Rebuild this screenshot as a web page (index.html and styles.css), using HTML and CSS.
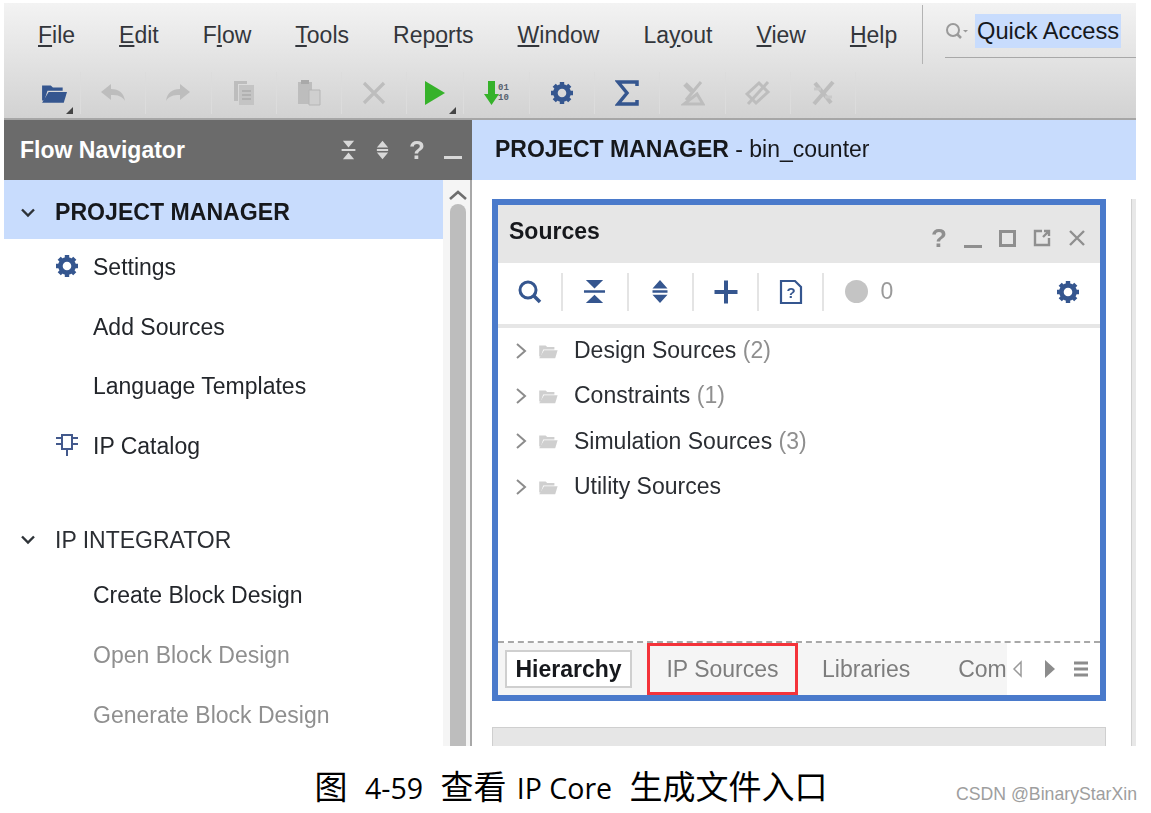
FILE: index.html
```html
<!DOCTYPE html>
<html lang="zh-CN">
<head>
  <meta charset="UTF-8">
  <title>图 4-59 查看 IP Core 生成文件入口</title>
  <link rel="stylesheet" href="styles.css">
</head>
<body>

  <svg class="defs" width="0" height="0">
    <symbol id="gear" viewBox="0 0 24 24">
      <circle cx="12" cy="12" r="6.6" fill="none" stroke="currentColor" stroke-width="4.6"/>
      <path d="M12 1v22M1 12h22M4.2 4.2l15.6 15.6M19.800 4.200L4.200 19.800" stroke="currentColor" stroke-width="4.400" stroke-dasharray="4.500 13 4.500 100"/>
    </symbol>
    <symbol id="collapse" viewBox="0 0 24 24" preserveAspectRatio="none">
      <path d="M3 1h18l-9 8zM3 23h18l-9-8z" fill="currentColor"/>
      <path d="M1 12h22" stroke="currentColor" stroke-width="2.400"/>
    </symbol>
    <symbol id="expand" viewBox="0 0 24 24" preserveAspectRatio="none">
      <path d="M12 1l9 8H3zM12 23l-9-8h18z" fill="currentColor"/>
      <path d="M3 12h18" stroke="currentColor" stroke-width="2.400"/>
    </symbol>
    <symbol id="folder" viewBox="0 0 24 20">
      <path d="M1 3h8l2 2h9v3H6L3 17H1z" fill="currentColor"/>
      <path d="M7 9h17l-3 10H1z" fill="currentColor"/>
    </symbol>
  </svg>

  <div class="app">
    <div class="top">
      <div class="menubar">
        <ul class="menu">
          <li><u>F</u>ile</li>
          <li><u>E</u>dit</li>
          <li>F<u>l</u>ow</li>
          <li><u>T</u>ools</li>
          <li>Rep<u>o</u>rts</li>
          <li><u>W</u>indow</li>
          <li>La<u>y</u>out</li>
          <li><u>V</u>iew</li>
          <li><u>H</u>elp</li>
        </ul>
        <div class="quick">
          <svg class="quick-icon" width="24" height="20" viewBox="0 0 24 20">
            <circle cx="8" cy="9" r="6" fill="none" stroke="#9a9a9a" stroke-width="2"/>
            <path d="M12 13l4 4" stroke="#9a9a9a" stroke-width="2.500"/>
            <path d="M18 9h5l-2.500 2.500z" fill="#9a9a9a"/>
          </svg>
          <span class="quick-text">Quick Access</span>
        </div>
      </div>
      <div class="toolbar">
        <div class="tool first more">
          <svg class="blue" width="26" height="22"><use href="#folder"/></svg>
        </div>
        <div class="tool">
          <svg width="26" height="20" viewBox="0 0 26 20"><path d="M1 9l10-8v5c8 0 13 4 14 12-3-5-7-6-14-6v5z" fill="#bdbdbd"/></svg>
        </div>
        <div class="tool">
          <svg width="26" height="20" viewBox="0 0 26 20"><path d="M25 9L15 1v5C7 6 2 10 1 18c3-5 7-6 14-6v5z" fill="#bdbdbd"/></svg>
        </div>
        <div class="tool">
          <svg width="22" height="26" viewBox="0 0 22 26"><path d="M1 1h13v3H5v17H1z" fill="#bdbdbd"/><path d="M6 5h15v20H6z" fill="#c4c4c4"/><path d="M9 11h9M9 15h9M9 19h9" stroke="#aaa" stroke-width="1.500"/></svg>
        </div>
        <div class="tool">
          <svg width="24" height="26" viewBox="0 0 24 26"><path d="M1 2h14v22H1z" fill="#bdbdbd"/><path d="M4 0h8v4H4z" fill="#a9a9a9"/><path d="M12 10h11v15H12z" fill="#cfcfcf" stroke="#b5b5b5"/></svg>
        </div>
        <div class="tool">
          <svg width="24" height="24" viewBox="0 0 24 24"><path d="M2 2l20 20M22 2L2 22" stroke="#bdbdbd" stroke-width="3.200"/></svg>
        </div>
        <div class="tool run more">
          <svg width="22" height="26" viewBox="0 0 22 26"><path d="M1 1l20 12L1 25z" fill="#36b22a"/></svg>
        </div>
        <div class="tool prog">
          <svg width="26" height="26" viewBox="0 0 26 26"><path d="M4 1h7v13h4l-7.500 11L0 14h4z" fill="#36b22a"/><text x="14" y="10" class="bits">01</text><text x="14" y="20" class="bits">10</text></svg>
        </div>
        <div class="tool">
          <svg class="blue" width="24" height="24"><use href="#gear"/></svg>
        </div>
        <div class="tool">
          <svg width="24" height="26" viewBox="0 0 24 26"><path d="M22 6V2H3l9 11-9 11h19v-4" fill="none" stroke="#35568f" stroke-width="3.500"/></svg>
        </div>
        <div class="tool">
          <svg width="24" height="26" viewBox="0 0 24 26"><path d="M3 24h19l-6-10zM20 2L5 20" stroke="#bdbdbd" stroke-width="3" fill="#d2d2d2"/><path d="M4 4l7 7" stroke="#bdbdbd" stroke-width="5"/></svg>
        </div>
        <div class="tool">
          <svg width="26" height="26" viewBox="0 0 26 26"><path d="M2 14L14 3l9 9-12 11z" fill="none" stroke="#bdbdbd" stroke-width="3"/><path d="M23 2L3 24" stroke="#bdbdbd" stroke-width="3"/></svg>
        </div>
        <div class="tool">
          <svg width="24" height="26" viewBox="0 0 24 26"><path d="M4 3l16 20M22 2L3 24" stroke="#bdbdbd" stroke-width="4"/><path d="M3 9h7M14 17h7" stroke="#c9c9c9" stroke-width="3"/></svg>
        </div>
      </div>
    </div>

    <div class="work">
      <aside class="nav">
        <div class="nav-head">
          <span class="nav-title">Flow Navigator</span>
          <span class="nav-tools">
            <svg width="15" height="20"><use href="#collapse"/></svg>
            <svg width="15" height="20"><use href="#expand"/></svg>
            <span class="help">?</span>
            <span class="min"></span>
          </span>
        </div>
        <div class="nav-body">
          <div class="nav-list">
            <div class="group active">
              <svg class="chev" width="16" height="10" viewBox="0 0 16 10"><path d="M2 1.500l6 6 6-6" fill="none" stroke="#2e3338" stroke-width="2.400"/></svg>
              PROJECT MANAGER
            </div>
            <div class="item">
              <svg class="item-icon blue" width="24" height="24"><use href="#gear"/></svg>
              Settings
            </div>
            <div class="item">Add Sources</div>
            <div class="item">Language Templates</div>
            <div class="item">
              <svg class="item-icon" width="24" height="24" viewBox="0 0 24 24"><path d="M7 2h10v14H7zM12 16v7M1 5h6M1 11h6M17 5h6M17 11h6" fill="none" stroke="#43598c" stroke-width="2"/></svg>
              IP Catalog
            </div>
            <div class="group second">
              <svg class="chev" width="16" height="10" viewBox="0 0 16 10"><path d="M2 1.500l6 6 6-6" fill="none" stroke="#2e3338" stroke-width="2.400"/></svg>
              IP INTEGRATOR
            </div>
            <div class="item">Create Block Design</div>
            <div class="item off">Open Block Design</div>
            <div class="item off">Generate Block Design</div>
          </div>
          <div class="scroll">
            <svg width="20" height="12" viewBox="0 0 20 12"><path d="M2 10l8-7 8 7" fill="none" stroke="#6e6e6e" stroke-width="2.600"/></svg>
            <div class="thumb"></div>
          </div>
        </div>
      </aside>

      <main class="main">
        <div class="main-head"><b>PROJECT MANAGER</b> - bin_counter</div>
        <div class="main-body">
          <div class="panels">
            <section class="sources">
              <div class="src-title">
                <span class="src-name">Sources</span>
                <span class="win-btns">
                  <span class="help">?</span>
                  <span class="min"></span>
                  <span class="box"></span>
                  <svg width="18" height="18" viewBox="0 0 18 18"><path d="M9 2H2v14h14V9M10 8l6-6M11 2h5v5" fill="none" stroke="#8f8f8f" stroke-width="2.400"/></svg>
                  <svg width="18" height="18" viewBox="0 0 18 18"><path d="M2 2l14 14M16 2L2 16" stroke="#8f8f8f" stroke-width="2.400"/></svg>
                </span>
              </div>
              <div class="src-tools">
                <div class="src-tool">
                  <svg width="26" height="26" viewBox="0 0 26 26"><circle cx="11" cy="11" r="8" fill="none" stroke="#35568f" stroke-width="3"/><path d="M17 17l6 6" stroke="#35568f" stroke-width="3.500"/></svg>
                </div>
                <div class="src-tool"><svg class="blue" width="23" height="25"><use href="#collapse"/></svg></div>
                <div class="src-tool"><svg class="blue" width="20" height="25"><use href="#expand"/></svg></div>
                <div class="src-tool">
                  <svg width="26" height="26" viewBox="0 0 26 26"><path d="M13 1.500v23M1.500 13h23" stroke="#35568f" stroke-width="4"/></svg>
                </div>
                <div class="src-tool">
                  <svg width="24" height="26" viewBox="0 0 24 26"><path d="M2 2h14l6 6v16H2z" fill="none" stroke="#35568f" stroke-width="2.200"/><text x="12" y="19" class="doc-q">?</text></svg>
                </div>
                <div class="src-count">
                  <span class="dot"></span>
                  <span>0</span>
                </div>
                <svg class="src-gear blue" width="24" height="24"><use href="#gear"/></svg>
              </div>
              <div class="tree">
                <div class="tree-row"><svg class="arrow" width="12" height="18" viewBox="0 0 12 18"><path d="M2 2l8 7-8 7" fill="none" stroke="#8c8c8c" stroke-width="2"/></svg><svg class="tree-folder" width="20" height="16"><use href="#folder"/></svg>Design Sources <em>(2)</em></div>
                <div class="tree-row"><svg class="arrow" width="12" height="18" viewBox="0 0 12 18"><path d="M2 2l8 7-8 7" fill="none" stroke="#8c8c8c" stroke-width="2"/></svg><svg class="tree-folder" width="20" height="16"><use href="#folder"/></svg>Constraints <em>(1)</em></div>
                <div class="tree-row"><svg class="arrow" width="12" height="18" viewBox="0 0 12 18"><path d="M2 2l8 7-8 7" fill="none" stroke="#8c8c8c" stroke-width="2"/></svg><svg class="tree-folder" width="20" height="16"><use href="#folder"/></svg>Simulation Sources <em>(3)</em></div>
                <div class="tree-row"><svg class="arrow" width="12" height="18" viewBox="0 0 12 18"><path d="M2 2l8 7-8 7" fill="none" stroke="#8c8c8c" stroke-width="2"/></svg><svg class="tree-folder" width="20" height="16"><use href="#folder"/></svg>Utility Sources</div>
              </div>
              <div class="tabs">
                <div class="tab-strip">
                  <span class="tab current">Hierarchy</span>
                  <span class="tab marked">IP Sources</span>
                  <span class="tab">Libraries</span>
                  <span class="tab last">Com</span>
                </div>
                <div class="tab-btns">
                  <svg width="12" height="18" viewBox="0 0 12 18"><path d="M9 2L2 9l7 7z" fill="none" stroke="#9a9a9a" stroke-width="1.500"/></svg>
                  <svg width="12" height="18" viewBox="0 0 12 18"><path d="M2 0l10 9-10 9z" fill="#8c8c8c"/></svg>
                  <svg width="14" height="18" viewBox="0 0 14 18"><path d="M0 3h14M0 9h14M0 15h14" stroke="#8c8c8c" stroke-width="3"/></svg>
                </div>
              </div>
            </section>
            <div class="lower"></div>
          </div>
          <div class="sliver"></div>
        </div>
      </main>
    </div>
  </div>

  <div class="caption">图 <span class="latin">4-59</span> 查看 <span class="latin tight">IP Core</span> 生成文件入口</div>
  <span class="mark">CSDN @BinaryStarXin</span>

</body>
</html>
```

FILE: styles.css
```css
* {
  margin: 0;
  padding: 0;
  box-sizing: border-box;
}

body {
  position: relative;
  height: 813px;
  overflow: hidden;
  background-color: #fff;
  font-family: "Liberation Sans", Arial, sans-serif;
  font-size: 23px;
  color: #23262b;
}

ul, li {
  list-style: none;
}

.defs {
  display: block;
  height: 0;
}

.blue {
  color: #35568f;
}

/* the source picture is a slightly soft upscale */
.app {
  width: 1132px;
  height: 743px;
  margin: 3px 0 0 4px;
  display: flex;
  flex-direction: column;
  overflow: hidden;
  filter: blur(0.35px);
}

/* top bars */
.top {
  height: 117px;
  flex: none;
  background: linear-gradient(#f3f3f3, #d2d2d2);
  border-bottom: 2px solid #a6a6a6;
}

.menubar {
  height: 60px;
  display: flex;
  align-items: flex-start;
  padding-left: 34px;
}

.menu {
  display: flex;
  gap: 44px;
  padding-top: 17px;
  flex: none;
  width: 885px;
  height: 59px;
  border-right: 1px solid #b3b3b3;
  margin-top: 2px;
  color: #33363b;
}

.quick {
  margin-left: 22px;
  padding-top: 11px;
  flex: 1;
  height: 55px;
  display: flex;
  align-items: flex-start;
  gap: 6px;
  border-bottom: 1px solid #a8a8a8;
}

.quick-icon {
  margin-top: 7px;
}

.quick-text {
  background-color: #c8dcfd;
  padding: 2px;
  font-size: 23.7px;
  line-height: 30px;
  height: 34px;
  color: #16181c;
}

.toolbar {
  height: 55px;
  display: flex;
  padding-left: 17px;
}

.tool {
  position: relative;
  width: 65.3px;
  height: 42px;
  margin-top: 9px;
  display: flex;
  justify-content: center;
  align-items: center;
  border-right: 1px solid #dcdcdc;
}

.tool.first {
  width: 60px;
  padding-left: 6px;
}

.tool.run {
  width: 57px;
}

.tool.more::after {
  content: "";
  position: absolute;
  right: 7px;
  bottom: 0;
  border-left: 7px solid transparent;
  border-bottom: 7px solid #444;
}

.bits {
  font-family: "Liberation Mono", monospace;
  font-size: 9px;
  font-weight: bold;
  fill: #55606e;
}

/* left side */
.work {
  flex: 1;
  display: flex;
  min-height: 0;
}

.nav {
  width: 468px;
  flex: none;
  display: flex;
  flex-direction: column;
}

.nav-head {
  height: 60px;
  flex: none;
  background-color: #6b6b6b;
  color: #fff;
  display: flex;
  align-items: center;
  justify-content: space-between;
  padding: 0 10px 0 16px;
}

.nav-title {
  font-weight: bold;
  font-size: 23px;
}

.nav-tools {
  display: flex;
  align-items: center;
  gap: 19px;
  color: #d8d8d8;
}

.help {
  font-weight: bold;
  font-size: 26px;
  line-height: 26px;
}

.min {
  display: block;
  width: 18px;
  height: 3px;
  margin-top: 14px;
  background-color: currentColor;
}

.nav-body {
  flex: 1;
  display: flex;
  min-height: 0;
}

.nav-list {
  width: 439px;
  flex: none;
}

.group {
  display: flex;
  align-items: center;
  height: 59px;
  padding-left: 16px;
  gap: 19px;
}

.group.active {
  background-color: #c8dcfd;
  padding-top: 6px;
  font-weight: bold;
  font-size: 23.1px;
  color: #16181c;
}

.group.second {
  height: 40px;
  margin-top: 43px;
  color: #2b2e33;
}

.item {
  position: relative;
  height: 59.6px;
  line-height: 56px;
  padding-left: 89px;
}

.group.second + .item {
  margin-top: 7px;
}

.item.off {
  color: #8f8f8f;
}

.item-icon {
  position: absolute;
  left: 51px;
  top: 15px;
}

.scroll {
  flex: 1;
  display: flex;
  flex-direction: column;
  align-items: center;
  padding: 9px 0 0 3px;
  background-color: #f5f5f5;
  border-right: 2px solid #a8a8a8;
}

.thumb {
  flex: 1;
  width: 16px;
  margin-top: 3px;
  border-radius: 8px 8px 0 0;
  background-color: #bdbdbd;
}

/* right side */
.main {
  flex: 1;
  min-width: 0;
  display: flex;
  flex-direction: column;
}

.main-head {
  height: 60px;
  flex: none;
  background-color: #c8dcfd;
  line-height: 59px;
  padding-left: 23px;
  color: #16181c;
}

.main-body {
  flex: 1;
  min-height: 0;
  display: flex;
  justify-content: space-between;
  padding-top: 19px;
  padding-left: 20px;
}

.panels {
  width: 614px;
}

.sliver {
  width: 5px;
  background-color: #e8e8e8;
  border-left: 1px solid #d0d0d0;
}

.sources {
  height: 502px;
  border: 6px solid #4a7acb;
  display: flex;
  flex-direction: column;
}

.src-title {
  height: 58px;
  flex: none;
  background-color: #e6e6e6;
  display: flex;
  justify-content: space-between;
  padding: 11px 14px 0 11px;
}

.src-name {
  font-weight: bold;
  font-size: 23px;
  line-height: 30px;
  color: #16181c;
}

.win-btns {
  display: flex;
  align-items: center;
  gap: 17px;
  height: 26px;
  margin-top: 9px;
  color: #8f8f8f;
}

.win-btns .min {
  margin-top: 16px;
}

.box {
  display: block;
  width: 17px;
  height: 17px;
  border: 3px solid #8f8f8f;
}

.src-tools {
  height: 65px;
  flex: none;
  display: flex;
  align-items: center;
  padding: 0 20px 4px 0;
  border-bottom: 4px solid #e6e6e6;
  color: #35568f;
}

.src-tool {
  width: 65.300px;
  height: 38px;
  display: flex;
  justify-content: center;
  align-items: center;
  border-right: 2px solid #e4e4e4;
}

.doc-q {
  font-family: "Liberation Sans", Arial, sans-serif;
  font-weight: bold;
  font-size: 15px;
  fill: #35568f;
  text-anchor: middle;
}

.src-count {
  display: flex;
  align-items: center;
  gap: 12px;
  margin-left: 21px;
  color: #9a9a9a;
}

.dot {
  display: block;
  width: 23px;
  height: 23px;
  border-radius: 50%;
  background-color: #c4c4c4;
}

.src-gear {
  margin-left: auto;
}

.tree {
  flex: 1;
  padding-left: 17px;
  border-bottom: 2px dashed #a8a8a8;
}

.tree-row {
  height: 45.300px;
  display: flex;
  align-items: center;
  white-space: pre;
  color: #2b2e33;
}

.tree-row em {
  font-style: normal;
  color: #8f8f8f;
}

.arrow {
  margin-right: 11px;
}

.tree-folder {
  margin-right: 16px;
  color: #cfcfcf;
}

.tabs {
  height: 52px;
  flex: none;
  display: flex;
}

.tab-strip {
  width: 509px;
  flex: none;
  display: flex;
  align-items: center;
  background-color: #f5f5f5;
  padding-left: 7px;
  white-space: nowrap;
}

.tab {
  flex: none;
  color: #7d7d7d;
  line-height: 46px;
}

.tab.current {
  width: 127px;
  height: 38px;
  line-height: 35px;
  text-align: center;
  background-color: #fff;
  border: 2px solid #cfcfcf;
  font-weight: bold;
  color: #16181c;
  margin-right: 15px;
}

.tab.marked {
  width: 151px;
  height: 52px;
  text-align: center;
  border: 3px solid #f4333a;
  margin-right: 24px;
}

.tab.last {
  margin-left: 48px;
}

.tab-btns {
  flex: 1;
  display: flex;
  align-items: center;
  gap: 19px;
  padding-left: 5px;
}

.lower {
  height: 40px;
  margin-top: 26px;
  background-color: #e6e6e6;
  border: 1px solid #cfcfcf;
}

/* figure caption under the screenshot */
.caption {
  margin-top: 17px;
  padding-right: 9px;
  text-align: center;
  font-family: "Noto Sans CJK SC", sans-serif;
  font-size: 33px;
  line-height: 44px;
  color: #000;
}

.latin {
  font-family: "Open Sans", sans-serif;
  font-size: 28.5px;
  margin: 0 10px;
}

.latin.tight {
  margin-left: 3px;
}

.mark {
  position: absolute;
  right: 14px;
  top: 784px;
  font-size: 17.7px;
  color: #9e9e9e;
}
```
